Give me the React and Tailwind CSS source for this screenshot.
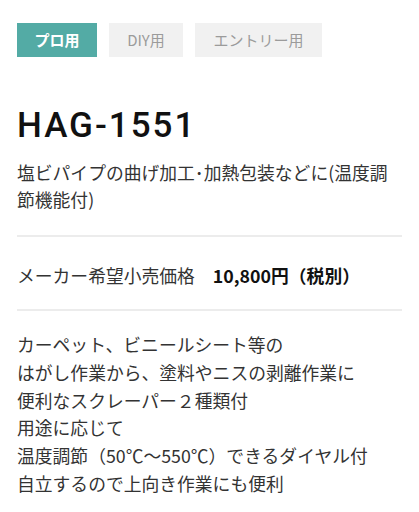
export default function App() {
  const jp = { fontFamily: '"Noto Sans CJK JP", "Noto Sans", sans-serif' };
  return (
    <div className="w-[419px] h-[512px] bg-white overflow-hidden text-[#333]" style={jp}>
      <div className="px-[17px] pt-[23px]">
        <div className="flex gap-[12px]">
          <div className="w-[80px] h-[34px] flex items-center justify-center bg-[#53aba5] text-white font-bold text-[15px]">プロ用</div>
          <div className="w-[74px] h-[34px] flex items-center justify-center bg-[#f1f1f1] text-[#9b9b9b] text-[15px]">DIY用</div>
          <div className="w-[127px] h-[34px] flex items-center justify-center bg-[#f1f1f1] text-[#9b9b9b] text-[15px]">エントリー用</div>
        </div>
        <h1 className="mt-[49px] text-[35px] leading-[40px] font-medium text-[#111] tracking-[2px]" style={{ fontFamily: 'Roboto, "Liberation Sans", sans-serif' }}>HAG-1551</h1>
        <p className="mt-[13px] text-[17.8px] leading-[27px]">塩ビパイプの曲げ加工･加熱包装などに(温度調節機能付)</p>
        <div className="mt-[22px] border-t-2 border-[#ececec] w-[385px]" />
        <div className="h-[72px] pt-[4px] flex items-center">
          <span className="text-[17.8px]">メーカー希望小売価格</span>
          <span className="ml-[18px] text-[17.8px] font-bold text-[#111]">10,800円（税別）</span>
        </div>
        <div className="border-t-2 border-[#ececec] w-[385px]" />
        <div className="mt-[20px] text-[17.8px] leading-[27.8px]">
          <div>カーペット、ビニールシート等の</div>
          <div>はがし作業から、塗料やニスの剥離作業に</div>
          <div>便利なスクレーパー２種類付</div>
          <div>用途に応じて</div>
          <div>温度調節（50℃～550℃）できるダイヤル付</div>
          <div>自立するので上向き作業にも便利</div>
        </div>
      </div>
    </div>
  );
}
